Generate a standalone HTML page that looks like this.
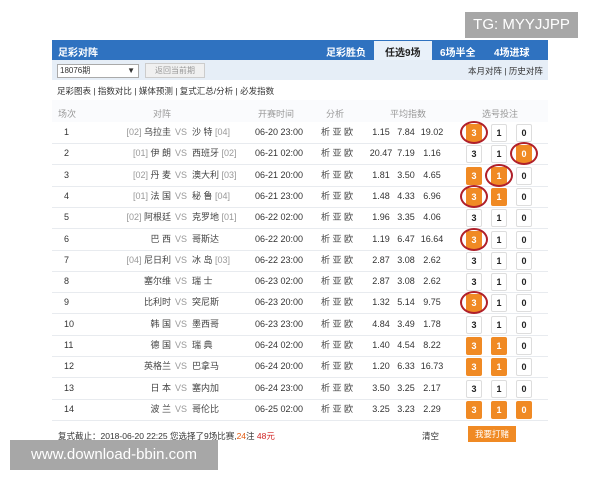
<!DOCTYPE html><html><head><meta charset="utf-8"><style>
body{margin:0;width:600px;height:480px;background:#fff;position:relative;overflow:hidden;font-family:"Liberation Sans","Noto Sans CJK SC",sans-serif;font-size:9px;color:#333}
.a{position:absolute}
.hdr{left:52px;top:40px;width:496px;height:20px;background:#2f72c0}
.row{position:absolute;left:52px;width:496px;height:21px;border-bottom:1px solid #e8ebef}
.c{position:absolute;top:0;line-height:21px;height:21px;white-space:nowrap}
.n{position:absolute;top:0;line-height:21px;width:30px;text-align:center}
.b{position:absolute;top:2px;width:14px;height:16px;border:1px solid #ddd;background:#fff;font-weight:bold;font-size:9px;text-align:center;line-height:16px;color:#222;border-radius:2px}
.o{background:#f08a24;border-color:#f08a24;color:#fff}
.ci{position:absolute;border:2px solid #b0202a;border-radius:50%;width:24px;height:19px;top:-1px}
.g{color:#999}
</style></head><body>
<div class="a" style="left:465px;top:12px;width:113px;height:26px;background:#a7a7a7;color:#fff;font-size:15px;line-height:26px;text-align:center">TG: MYYJJPP</div>
<div class="a hdr"></div>
<div class="a" style="left:58px;top:44px;color:#fff;font-weight:bold;font-size:10px">足彩对阵</div>
<div class="a" style="left:326px;top:44px;color:#fff;font-weight:bold;font-size:10px">足彩胜负</div>
<div class="a" style="left:374px;top:41px;width:58px;height:19px;background:#e9f1fa"></div>
<div class="a" style="left:385px;top:44px;color:#222;font-weight:bold;font-size:10px">任选9场</div>
<div class="a" style="left:440px;top:44px;color:#fff;font-weight:bold;font-size:10px">6场半全</div>
<div class="a" style="left:494px;top:44px;color:#fff;font-weight:bold;font-size:10px">4场进球</div>
<div class="a" style="left:52px;top:60px;width:496px;height:20px;background:#e6eef7"></div>
<div class="a" style="left:57px;top:64px;width:78px;height:12px;border:1px solid #aaa;background:#fff;font-size:8px;line-height:12px;padding-left:2px">18076期<span style="float:right;margin-right:3px">▼</span></div>
<div class="a" style="left:145px;top:63px;width:58px;height:13px;border:1px solid #ccc;background:#f0f0f0;color:#999;font-size:8px;line-height:13px;text-align:center">返回当前期</div>
<div class="a" style="left:468px;top:65px;font-size:8.5px">本月对阵 | 历史对阵</div>
<div class="a" style="left:57px;top:85px;font-size:8.5px">足彩图表 | 指数对比 | 媒体预测 | 复式汇总/分析 | 必发指数</div>
<div class="a" style="left:52px;top:100px;width:496px;height:22px;background:#fafbfd"></div>
<div class="a g" style="left:58px;top:107px">场次</div><div class="a g" style="left:153px;top:107px">对阵</div><div class="a g" style="left:258px;top:107px">开赛时间</div><div class="a g" style="left:326px;top:107px">分析</div><div class="a g" style="left:390px;top:107px">平均指数</div><div class="a g" style="left:482px;top:107px">选号投注</div>
<div id="rows"></div>
<div class="a" style="left:58px;top:430px;font-size:8.5px">复式截止：2018-06-20 22:25 您选择了9场比赛,<span style="color:#e05a10">24</span>注 <span style="color:#d02020">48元</span></div>
<div class="a" style="left:422px;top:430px;font-size:8.5px">清空</div>
<div class="a" style="left:468px;top:426px;width:48px;height:16px;background:#f08a24;color:#fff;font-size:8.5px;text-align:center;line-height:16px">我要打赌</div>
<div class="a" style="left:10px;top:440px;width:208px;height:30px;background:#a7a7a7;color:#fff;font-size:15px;line-height:30px;text-align:center">www.download-bbin.com</div>
<script>
var d=[["[02] 乌拉圭","沙 特 [04]","06-20 23:00","1.15 7.84 19.02","o3c3"],
["[01] 伊 朗","西班牙 [02]","06-21 02:00","20.47 7.19 1.16","o0c0"],
["[02] 丹 麦","澳大利 [03]","06-21 20:00","1.81 3.50 4.65","o3o1c1"],
["[01] 法 国","秘 鲁 [04]","06-21 23:00","1.48 4.33 6.96","o3o1c3"],
["[02] 阿根廷","克罗地 [01]","06-22 02:00","1.96 3.35 4.06",""],
["巴 西","哥斯达","06-22 20:00","1.19 6.47 16.64","o3c3"],
["[04] 尼日利","冰 岛 [03]","06-22 23:00","2.87 3.08 2.62",""],
["塞尔维","瑞 士","06-23 02:00","2.87 3.08 2.62",""],
["比利时","突尼斯","06-23 20:00","1.32 5.14 9.75","o3c3"],
["韩 国","墨西哥","06-23 23:00","4.84 3.49 1.78",""],
["德 国","瑞 典","06-24 02:00","1.40 4.54 8.22","o3o1"],
["英格兰","巴拿马","06-24 20:00","1.20 6.33 16.73","o3o1"],
["日 本","塞内加","06-24 23:00","3.50 3.25 2.17",""],
["波 兰","哥伦比","06-25 02:00","3.25 3.23 2.29","o3o1o0"]];
var h="",X={3:414,1:439,0:464};
function br(s){return s.replace(/(\[\d+\])/,'<span class="g">$1</span>');}
d.forEach(function(r,i){var t=122+i*21.3;
h+='<div class="row" style="top:'+t+'px"><div class="c" style="left:12px">'+(i+1)+'</div>';
h+='<div class="c" style="right:377px;color:#444">'+br(r[0])+'</div>';
h+='<div class="c g" style="left:123px">VS</div>';
h+='<div class="c" style="left:140px;color:#444">'+br(r[1])+'</div>';
h+='<div class="c" style="left:203px">'+r[2]+'</div>';
h+='<div class="c" style="left:269px;color:#444">析 亚 欧</div>';
var p=r[3].split(" "),cx=[314,339,365];
p.forEach(function(v,j){h+='<div class="n" style="left:'+cx[j]+'px">'+v+'</div>';});
["3","1","0"].forEach(function(k){var o=r[4].indexOf("o"+k)>=0;h+='<div class="b'+(o?" o":"")+'" style="left:'+X[k]+'px">'+k+'</div>';if(r[4].indexOf("c"+k)>=0)h+='<div class="ci" style="left:'+(X[k]-6)+'px"></div>';});
h+='</div>';});
document.getElementById("rows").innerHTML=h;
</script>
</body></html>
